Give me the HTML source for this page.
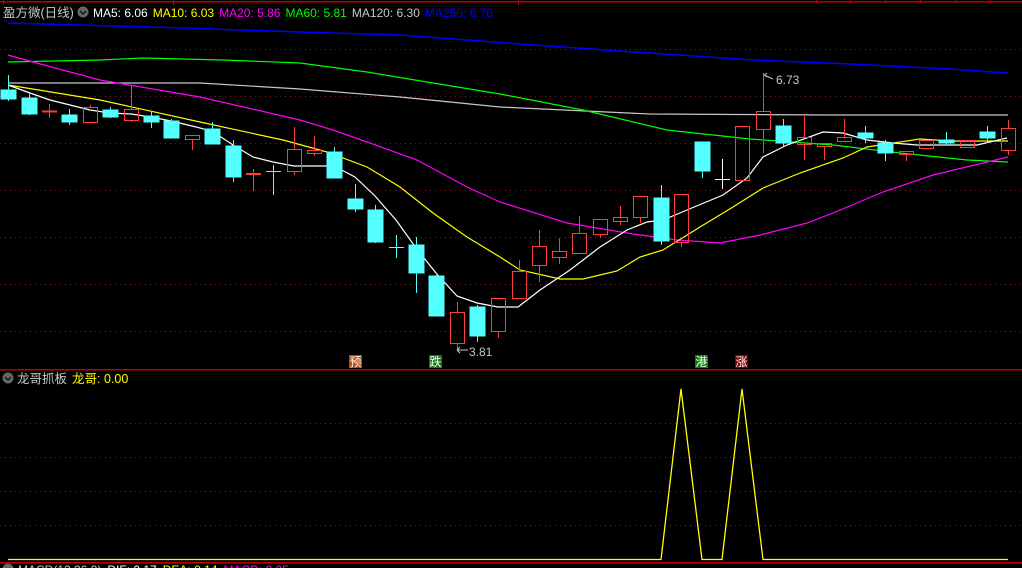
<!DOCTYPE html>
<html><head><meta charset="utf-8"><style>
html,body{margin:0;padding:0;background:#000;width:1022px;height:568px;overflow:hidden}
svg{display:block}
text{font-family:"Liberation Sans","Noto Sans CJK SC",sans-serif}
</style></head><body>
<svg width="1022" height="568" viewBox="0 0 1022 568" xmlns="http://www.w3.org/2000/svg" shape-rendering="crispEdges">
<rect width="1022" height="568" fill="#000"/>
<line x1="0" y1="1.5" x2="1022" y2="1.5" stroke="#c00000" stroke-width="1.5"/>
<g stroke="#c00000" stroke-width="1"><line x1="3.5" y1="0" x2="3.5" y2="5"/><line x1="173.5" y1="0" x2="173.5" y2="5"/><line x1="518.5" y1="0" x2="518.5" y2="5"/><line x1="816.5" y1="0" x2="816.5" y2="3"/><line x1="850.5" y1="0" x2="850.5" y2="3"/><line x1="885.5" y1="0" x2="885.5" y2="3"/><line x1="920.5" y1="0" x2="920.5" y2="3"/><line x1="955.5" y1="0" x2="955.5" y2="3"/><line x1="990.5" y1="0" x2="990.5" y2="3"/></g>
<g stroke="#8b1a1a" stroke-width="1" stroke-dasharray="1,4">
<line x1="0" y1="49.5" x2="1022" y2="49.5"/><line x1="0" y1="96.5" x2="1022" y2="96.5"/><line x1="0" y1="143.5" x2="1022" y2="143.5"/><line x1="0" y1="190.5" x2="1022" y2="190.5"/><line x1="0" y1="237.5" x2="1022" y2="237.5"/><line x1="0" y1="284.5" x2="1022" y2="284.5"/><line x1="0" y1="331.5" x2="1022" y2="331.5"/>
<line x1="0" y1="423.5" x2="1022" y2="423.5"/><line x1="0" y1="457.5" x2="1022" y2="457.5"/><line x1="0" y1="491.5" x2="1022" y2="491.5"/><line x1="0" y1="525.5" x2="1022" y2="525.5"/>
</g>
<line x1="0" y1="369.5" x2="1022" y2="369.5" stroke="#c00000" stroke-width="1.5"/>
<line x1="0" y1="562.5" x2="1022" y2="562.5" stroke="#c00000" stroke-width="1.5"/>

<g fill="none" stroke-width="1.2" shape-rendering="auto">
<polyline stroke="#0000ff" stroke-width="1.5" points="8,23 183,28 300,32 400,35 520,44 620,51 753,60 850,64 950,69 1008,73"/>
<polyline stroke="#c8c8c8" points="8,83 200,83 300,89 400,97 500,107 650,114 833,115 1008,115"/>
<polyline stroke="#00ff00" points="8,62 100,60 143,58 223,60 300,63 367,72 433,83 500,94 583,110 667,130 750,139 833,145 900,153 967,160 1008,162"/>
<polyline stroke="#ff00ff" points="8,55 33,62 100,80 200,97 300,120 333,130 367,142 417,160 467,187 500,202 567,223 633,234 677,240 720,243 760,235 807,223 833,213 883,192 933,175 983,163 1008,157"/>
<polyline stroke="#ffff00" points="8,85 100,100 200,122 283,140 327,152 367,167 400,187 433,213 467,237 500,257 520,270 560,279 583,279 617,271 640,257 663,250 700,227 733,207 763,188 800,173 843,158 867,147 920,139 950,141 1008,141"/>
<polyline stroke="#ffffff" points="8,85 30,93 50,100 70,105 90,110 110,113 131,114 151,117 171,121 192,126 212,131 233,145 253,157 273,162 294,166 334,166 355,177 375,196 396,220 416,248 436,273 457,296 477,303 498,307 518,307 540,290 570,270 600,247 627,230 647,222 663,220 687,210 723,195 747,178 763,157 787,145 823,132 843,133 867,140 893,143 917,145 977,145 1007,138"/>
</g>

<g stroke="#54ffff" fill="#54ffff" stroke-width="1">
<line x1="8.5" y1="75" x2="8.5" y2="101"/><rect x="1" y="90" width="15" height="9"/>
<line x1="29.5" y1="93" x2="29.5" y2="115"/><rect x="22" y="98" width="15" height="16"/>
<line x1="69.5" y1="109" x2="69.5" y2="125"/><rect x="62" y="115" width="15" height="7"/>
<line x1="110.5" y1="107" x2="110.5" y2="118"/><rect x="103" y="110" width="15" height="7"/>
<line x1="151.5" y1="112" x2="151.5" y2="128"/><rect x="144" y="116" width="15" height="6"/>
<line x1="171.5" y1="119" x2="171.5" y2="122"/><rect x="164" y="121" width="15" height="17"/>
<line x1="212.5" y1="122" x2="212.5" y2="130"/><rect x="205" y="129" width="15" height="15"/>
<line x1="233.5" y1="140" x2="233.5" y2="182"/><rect x="226" y="146" width="15" height="31"/>
<line x1="266" y1="171.5" x2="281" y2="171.5"/><line x1="273.5" y1="165" x2="273.5" y2="195"/>
<line x1="334.5" y1="147" x2="334.5" y2="153"/><rect x="327" y="152" width="15" height="26"/>
<line x1="355.5" y1="184" x2="355.5" y2="212"/><rect x="348" y="199" width="15" height="10"/>
<line x1="375.5" y1="205" x2="375.5" y2="243"/><rect x="368" y="210" width="15" height="32"/>
<line x1="389" y1="247.5" x2="404" y2="247.5"/><line x1="396.5" y1="235" x2="396.5" y2="258"/>
<line x1="416.5" y1="237" x2="416.5" y2="293"/><rect x="409" y="245" width="15" height="28"/>
<line x1="436.5" y1="275" x2="436.5" y2="280"/><rect x="429" y="276" width="15" height="40"/>
<line x1="477.5" y1="305" x2="477.5" y2="342"/><rect x="470" y="307" width="15" height="29"/>
<line x1="661.5" y1="185" x2="661.5" y2="245"/><rect x="654" y="198" width="15" height="43"/>
<line x1="702.5" y1="170" x2="702.5" y2="178"/><rect x="695" y="142" width="15" height="29"/>
<line x1="783.5" y1="119" x2="783.5" y2="146"/><rect x="776" y="126" width="15" height="17"/>
<line x1="865.5" y1="126" x2="865.5" y2="143"/><rect x="858" y="133" width="15" height="5"/>
<line x1="885.5" y1="140" x2="885.5" y2="161"/><rect x="878" y="143" width="15" height="10"/>
<line x1="946.5" y1="132" x2="946.5" y2="145"/><rect x="939" y="140" width="15" height="3"/>
<line x1="987.5" y1="126" x2="987.5" y2="143"/><rect x="980" y="132" width="15" height="6"/>
</g>
<g stroke="#ffffff"><line x1="715" y1="179.5" x2="730" y2="179.5"/><line x1="722.5" y1="159" x2="722.5" y2="189"/></g>
<g stroke="#ff3c3c" fill="none" stroke-width="1">
<line x1="42" y1="111.5" x2="57" y2="111.5" stroke-width="2"/><line x1="49.5" y1="104" x2="49.5" y2="118"/>
<line x1="90.5" y1="105" x2="90.5" y2="107"/><rect x="83.5" y="107.5" width="14" height="15"/>
<line x1="131.5" y1="86" x2="131.5" y2="109"/><line x1="131.5" y1="121" x2="131.5" y2="122"/><rect x="124.5" y="109.5" width="14" height="11"/>
<line x1="192.5" y1="139" x2="192.5" y2="150"/><rect x="185.5" y="135.5" width="14" height="4"/>
<line x1="246" y1="174" x2="261" y2="174" stroke-width="2"/><line x1="253.5" y1="169" x2="253.5" y2="191"/>
<line x1="294.5" y1="127" x2="294.5" y2="149"/><line x1="294.5" y1="172" x2="294.5" y2="175"/><rect x="287.5" y="149.5" width="14" height="22"/>
<line x1="314.5" y1="136" x2="314.5" y2="150"/><line x1="314.5" y1="153" x2="314.5" y2="156"/><rect x="307.5" y="150.5" width="14" height="3"/>
<line x1="457.5" y1="302" x2="457.5" y2="312"/><line x1="457.5" y1="344" x2="457.5" y2="350"/><rect x="450.5" y="312.5" width="14" height="31"/>
<line x1="498.5" y1="332" x2="498.5" y2="338"/><rect x="491.5" y="298.5" width="14" height="33"/>
<line x1="519.5" y1="260" x2="519.5" y2="271"/><rect x="512.5" y="271.5" width="14" height="27"/>
<line x1="539.5" y1="230" x2="539.5" y2="246"/><line x1="539.5" y1="265" x2="539.5" y2="282"/><rect x="532.5" y="246.5" width="14" height="19"/>
<line x1="559.5" y1="238" x2="559.5" y2="251"/><line x1="559.5" y1="257" x2="559.5" y2="264"/><rect x="552.5" y="251.5" width="14" height="6"/>
<line x1="579.5" y1="216" x2="579.5" y2="233"/><rect x="572.5" y="233.5" width="14" height="20"/>
<line x1="600.5" y1="234" x2="600.5" y2="238"/><rect x="593.5" y="219.5" width="14" height="15"/>
<line x1="620.5" y1="206" x2="620.5" y2="217"/><line x1="620.5" y1="221" x2="620.5" y2="225"/><rect x="613.5" y="217.5" width="14" height="4"/>
<line x1="640.5" y1="217" x2="640.5" y2="223"/><rect x="633.5" y="196.5" width="14" height="21"/>
<line x1="681.5" y1="242" x2="681.5" y2="247"/><rect x="674.5" y="194.5" width="14" height="48"/>
<rect x="735.5" y="126.5" width="14" height="54"/>
<line x1="763.5" y1="73" x2="763.5" y2="111"/><line x1="763.5" y1="129" x2="763.5" y2="153"/><rect x="756.5" y="111.5" width="14" height="18"/>
<line x1="804.5" y1="116" x2="804.5" y2="137"/><line x1="804.5" y1="144" x2="804.5" y2="160"/><rect x="797.5" y="137.5" width="14" height="7"/>
<line x1="824.5" y1="146" x2="824.5" y2="160"/><rect x="817.5" y="143.5" width="14" height="3"/>
<line x1="844.5" y1="119" x2="844.5" y2="137"/><rect x="837.5" y="137.5" width="14" height="4"/>
<line x1="906.5" y1="154" x2="906.5" y2="161"/><rect x="899.5" y="151.5" width="14" height="3"/>
<line x1="926.5" y1="148" x2="926.5" y2="149"/><rect x="919.5" y="140.5" width="14" height="8"/>
<rect x="960.5" y="140.5" width="14" height="7"/>
<line x1="1008.5" y1="120" x2="1008.5" y2="128"/><line x1="1008.5" y1="150" x2="1008.5" y2="155"/><rect x="1001.5" y="128.5" width="14" height="22"/>
</g>

<g stroke="#c8c8c8" fill="none" shape-rendering="auto"><path d="M764 75 L773 79 M764 75 L767 73 M764 75 L767 77"/><path d="M457 350 L468 350 M457 350 L460 347 M457 350 L460 353"/></g>
<text x="776" y="84" fill="#c8c8c8" font-size="12">6.73</text>
<text x="469" y="356" fill="#c8c8c8" font-size="12">3.81</text>

<rect x="349" y="355" width="13" height="13" fill="#b0480c"/><text x="349.5" y="366" fill="#fff" font-size="12">预</text>
<rect x="429" y="355" width="13" height="13" fill="#0c7c0c"/><text x="429.5" y="366" fill="#fff" font-size="12">跌</text>
<rect x="695" y="355" width="13" height="13" fill="#0c7c0c"/><text x="695.5" y="366" fill="#fff" font-size="12">港</text>
<rect x="735" y="355" width="13" height="13" fill="#800000"/><text x="735.5" y="366" fill="#fff" font-size="12">涨</text>

<polyline fill="none" stroke="#ffff00" stroke-width="1.3" shape-rendering="auto" points="8,559.5 661,559.5 681,389 702,559.5 722,559.5 742,389 763,559.5 1008,559.5"/>

<text x="3" y="17" fill="#c8c8c8" font-size="12.5">盈方微(日线)</text>
<circle cx="83" cy="12" r="5.5" fill="#666"/><path d="M80 11 L83 14 L86 11" stroke="#111" stroke-width="1.3" fill="none" shape-rendering="auto"/>
<text x="93" y="17" font-size="12"><tspan fill="#ffffff">MA5: 6.06</tspan><tspan fill="#ffff00" dx="5">MA10: 6.03</tspan><tspan fill="#ff00ff" dx="5">MA20: 5.86</tspan><tspan fill="#00ff00" dx="5">MA60: 5.81</tspan><tspan fill="#c8c8c8" dx="5">MA120: 6.30</tspan><tspan fill="#0000ff" dx="5">MA250: 6.76</tspan></text>

<circle cx="8" cy="378" r="5.5" fill="#666"/><path d="M5 377 L8 380 L11 377" stroke="#111" stroke-width="1.3" fill="none" shape-rendering="auto"/>
<text x="17" y="383" font-size="12.5"><tspan fill="#c8c8c8">龙哥抓板</tspan><tspan fill="#ffff00" dx="5">龙哥</tspan><tspan fill="#ffff00">: 0.00</tspan></text>

<circle cx="8" cy="569" r="5.5" fill="#666"/>
<text x="18" y="574" font-size="12"><tspan fill="#c8c8c8">MACD(12,26,9)</tspan><tspan fill="#fff" dx="6">DIF: 0.17</tspan><tspan fill="#ffff00" dx="6">DEA: 0.14</tspan><tspan fill="#ff00ff" dx="6">MACD: 0.05</tspan></text>
</svg>
</body></html>
